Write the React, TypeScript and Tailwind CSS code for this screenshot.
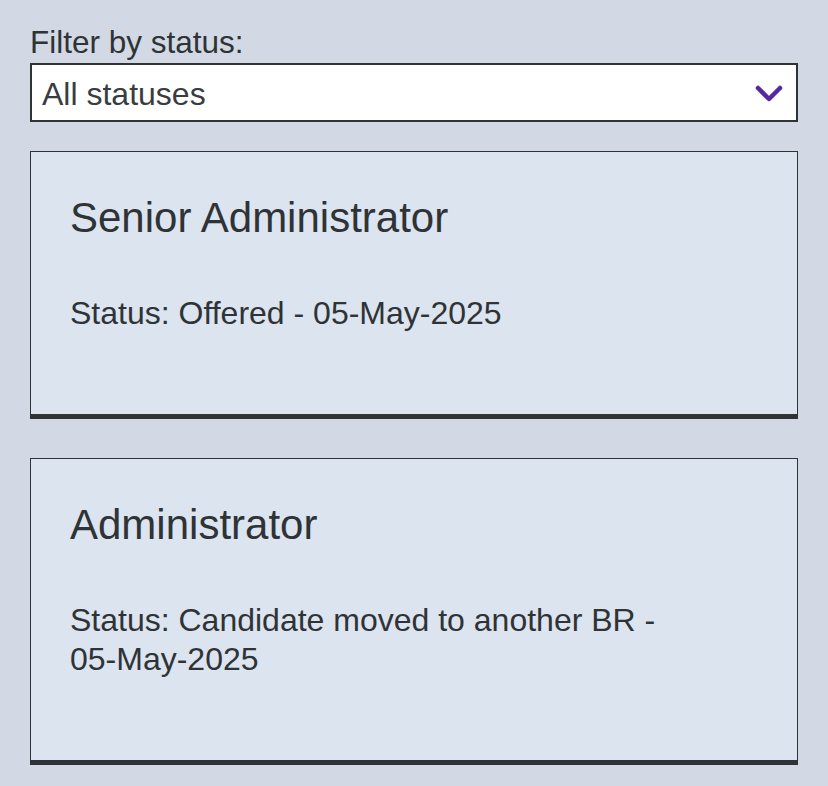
import React from 'react';

const applications = [
  { title: 'Senior Administrator', status: 'Offered', date: '05-May-2025' },
  { title: 'Administrator', status: 'Candidate moved to another BR', date: '05-May-2025' },
];

function Chevron() {
  return (
    <svg width="28" height="18" viewBox="0 0 28 18" fill="none">
      <path d="M3 3 L14 14 L25 3" stroke="#5527a0" strokeWidth="4.5" strokeLinecap="round" strokeLinejoin="round" />
    </svg>
  );
}

export default function App() {
  return (
    <div
      className="min-h-screen bg-[#d2d9e4] pl-[30px] pt-[24px] text-[#2f3336]"
      style={{ fontFamily: '"Liberation Sans", Arial, sans-serif' }}
    >
      <div className="w-[768px]">
        {/* Filter */}
        <label className="block text-[31.5px] leading-[36px]">Filter by status:</label>
        <div className="mt-[3px] flex h-[59px] items-center justify-between border-2 border-[#2f3336] bg-white pl-[10px] pr-[13px] pt-[2px]">
          <span className="text-[32px] leading-[36px] text-[#3a3d40]">All statuses</span>
          <Chevron />
        </div>

        {/* Application cards */}
        <div className="mt-[29px] flex flex-col gap-[39px]">
          {applications.map((app) => (
            <div
              key={app.title}
              className="border border-b-[5px] border-[#2f3336] bg-[#dbe4ef] pl-[39px] pr-[40px] pt-[42px] pb-[81px]"
            >
              <h2 className="text-[42px] leading-[48px]">{app.title}</h2>
              <p className="mt-[52px] text-[32px] leading-[39px]">
                Status: {app.status} - <span className="whitespace-nowrap">{app.date}</span>
              </p>
            </div>
          ))}
        </div>
      </div>
    </div>
  );
}
